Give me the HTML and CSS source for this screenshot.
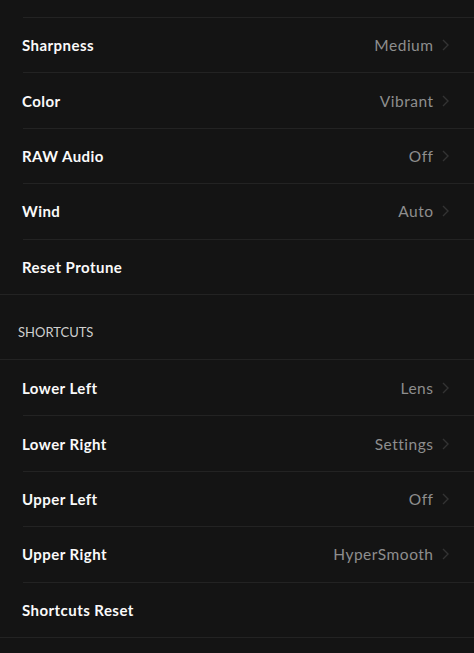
FILE: index.html
```html
<!DOCTYPE html>
<html>
<head>
<meta charset="utf-8">
<link rel="stylesheet" href="styles.css">
</head>
<body>
<div class="top-spacer"></div>
<ul class="group">
  <li class="row"><span class="label">Sharpness</span><span class="value">Medium</span><svg class="chev" viewBox="0 0 7 12"><path d="M1 1l5 5-5 5"/></svg></li>
  <li class="row"><span class="label">Color</span><span class="value">Vibrant</span><svg class="chev" viewBox="0 0 7 12"><path d="M1 1l5 5-5 5"/></svg></li>
  <li class="row"><span class="label">RAW Audio</span><span class="value">Off</span><svg class="chev" viewBox="0 0 7 12"><path d="M1 1l5 5-5 5"/></svg></li>
  <li class="row"><span class="label">Wind</span><span class="value">Auto</span><svg class="chev" viewBox="0 0 7 12"><path d="M1 1l5 5-5 5"/></svg></li>
  <li class="row"><span class="label">Reset Protune</span></li>
</ul>
<div class="section-header">SHORTCUTS</div>
<ul class="group">
  <li class="row first"><span class="label">Lower Left</span><span class="value">Lens</span><svg class="chev" viewBox="0 0 7 12"><path d="M1 1l5 5-5 5"/></svg></li>
  <li class="row"><span class="label">Lower Right</span><span class="value">Settings</span><svg class="chev" viewBox="0 0 7 12"><path d="M1 1l5 5-5 5"/></svg></li>
  <li class="row"><span class="label">Upper Left</span><span class="value">Off</span><svg class="chev" viewBox="0 0 7 12"><path d="M1 1l5 5-5 5"/></svg></li>
  <li class="row"><span class="label">Upper Right</span><span class="value">HyperSmooth</span><svg class="chev" viewBox="0 0 7 12"><path d="M1 1l5 5-5 5"/></svg></li>
  <li class="row"><span class="label">Shortcuts Reset</span></li>
</ul>
</body>
</html>
```

FILE: styles.css
```css
html, body {
  margin: 0;
  padding: 0;
  background: #141414;
}
body {
  font-family: Lato, "Noto Sans", sans-serif;
  color: #fff;
  overflow: hidden;
}
.top-spacer {
  height: 17px;
}
.group {
  list-style: none;
  margin: 0;
  padding: 0 0 0 23px;
  border-bottom: 1px solid #232323;
}
.row {
  box-sizing: border-box;
  height: 55.4px;
  display: flex;
  align-items: center;
  border-top: 1px solid #232323;
  padding-right: 25px;
}
.row.first {
  border-top: none;
}
.label {
  flex: 1;
  margin-left: -1px;
  font-weight: 700;
  font-size: 15px;
  letter-spacing: 0.45px;
  color: #fafafa;
}
.value {
  font-size: 15.5px;
  letter-spacing: 0.5px;
  color: #8e8e8e;
  margin-right: 8.5px;
}
.chev {
  width: 7px;
  height: 12px;
  fill: none;
  stroke: #333333;
  stroke-width: 1.4;
}
.section-header {
  box-sizing: border-box;
  height: 65px;
  padding: 29px 0 0 18px;
  font-size: 13px;
  color: #cfcfcf;
  border-bottom: 1px solid #232323;
}
```
